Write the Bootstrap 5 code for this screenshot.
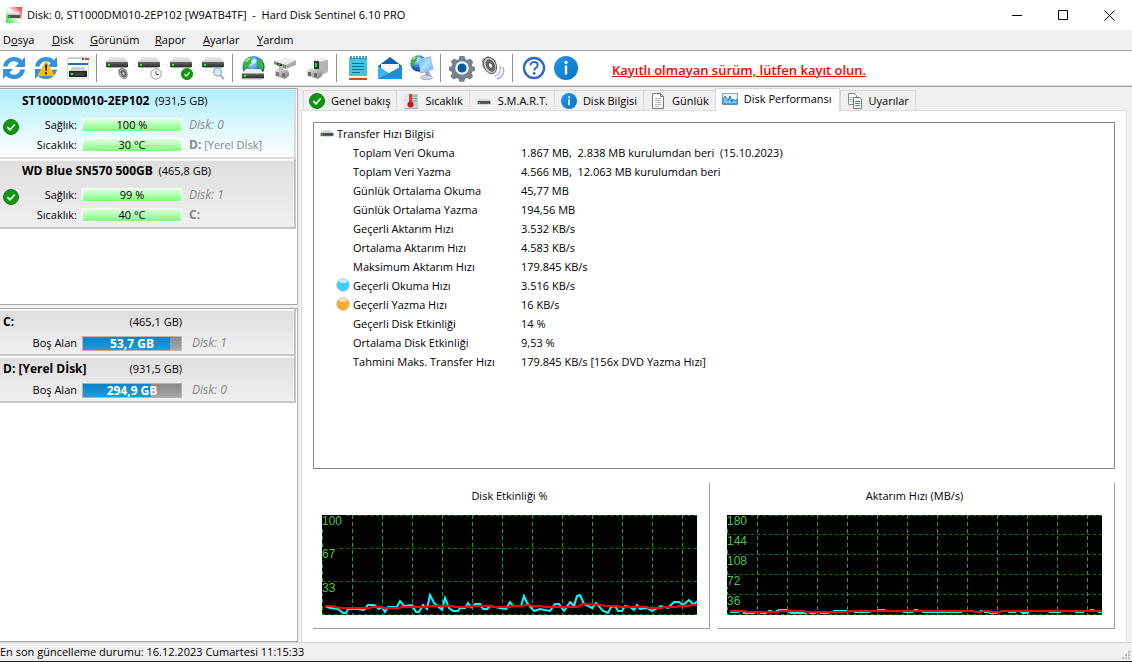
<!DOCTYPE html>
<html lang="tr">
<head>
<meta charset="utf-8">
<meta name="viewport" content="width=device-width, initial-scale=1">
<title>Hard Disk Sentinel 6.10 PRO</title>
<link href="https://cdn.jsdelivr.net/npm/bootstrap@5.3.0/dist/css/bootstrap.min.css" rel="stylesheet">
<style>
body{font-family:"Open Sans","Noto Sans",sans-serif;font-size:11px;line-height:16px;color:#000;background:#f0f0f0}
b,strong,.vol-name{font-size:12px;font-weight:700}
button{font:inherit;color:inherit}
.titlebar{height:30px;background:#fff;padding-left:6px;gap:5px;font-size:11px}
.titlebar h1{font-size:11px;line-height:16px;font-weight:400;white-space:pre;margin:0}
.win-btn{width:46px;height:30px;border:0;background:none;padding:0;display:grid;place-items:center}
.menubar{height:20px}
.menubar .nav{padding-left:3px}
.menubar a{color:#000;padding:0;line-height:20px}
.menubar li:nth-child(1){width:49px}.menubar li:nth-child(2){width:38px}
.menubar li:nth-child(3){width:65px}.menubar li:nth-child(4){width:48px}.menubar li:nth-child(5){width:54px}
.toolbar{background:#fff;border-top:1px solid #a0a0a0;border-bottom:1px solid #dcdcdc;min-height:36px;gap:4px}
.tool-btn{width:28px;height:28px;border:0;padding:0;background:none;display:block}
.tool-btn svg{display:block}
.tool-sep{width:1px;height:28px;background:#909090;margin-right:3px}
.reg-note{font-size:13px;font-weight:600;line-height:20px;color:#f00;margin-left:28px;padding-top:4px}
.reg-note:hover{color:#f00}
.workspace{border-top:1px solid #a0a0a0;padding-top:1px;min-height:0}
.side{width:298px;gap:3px}
.side-list{background:#fff;border:1px solid #a8a8a8;border-left:0;overflow:hidden;padding-right:1px}
.disks{flex:217 1 0}.vols{flex:334 1 0}
.disk-item{min-height:70px;padding:0 0 0 3px;gap:3px;background:linear-gradient(#dedede,#f0f0f0);border:solid #c6c6c6;border-width:0 2px 2px 0;box-shadow:inset 0 1px #fff,inset 0 2px #f4f4f4}
.disk-item.selected{background:linear-gradient(#b0efff,#fff);border-color:#dcdcdc;box-shadow:inset 0 1px #d8f6ff}
.item-title{line-height:20px;margin-bottom:4px}
.stat{height:20px;gap:5px}
.stat-label{width:55px;text-align:right}
.meter-ok{width:100px;height:14px;border:1px solid #fff;border-width:1px;background:linear-gradient(#e2ffe2,#7cff7c);text-align:center;line-height:12px}
.note{color:#888;margin-left:2px}
em.note{font-size:12px}
.vol-item{padding:3px 0 0 3px;background:linear-gradient(#dedede,#f0f0f0);border:solid #c6c6c6;border-width:0 2px 2px 0;box-shadow:inset 0 1px #fff,inset 0 2px #f4f4f4}
.vol-head{width:179px;line-height:20px}
.vol-row{height:22px;gap:5px}
.vol-row .stat-label{width:74px}
.meter-vol{width:100px;height:15px;border:1px solid #b4b4b4;border-radius:0;background:linear-gradient(#888,#a8a8a8);position:relative}
.meter-vol .progress-bar{background:linear-gradient(#0d83c4,#209bdb)}
.meter-text{position:absolute;inset:0;text-align:center;color:#fff;font-size:12px;font-weight:700;line-height:13px}
.vol-row .note{margin-left:5px}
.content-area{margin:2px 5px 0 3px;min-width:0}
.tabs{padding-left:2px;border:0;height:21px;flex-wrap:nowrap;align-items:flex-end}
.tabs .nav-link{height:20px;border:solid #d9d9d9;border-width:1px 0 0 1px;border-radius:0;margin:0 0 1px;padding:0 6px 0 5px;gap:6px;background:#f0f0f0;color:#000;white-space:nowrap;display:flex;align-items:center;line-height:16px}
.tabs .nav-link:hover{border-color:#d9d9d9}
.tabs .nav-link.active{height:23px;margin:0;background:#fff;border-color:#d9d9d9;border-right-width:1px;padding:0 7px 3px 6px;position:relative;z-index:1}
.tabs li:last-child .nav-link{border-right-width:1px}
.tabs li+li .nav-link{padding-left:6px}
.pane{background:#fff;border:1px solid #dcdcdc;border-bottom:0;margin-top:-1px;padding:11px 11px 13px;gap:14px}
.info-list{border:1px solid #828790;padding-top:1px;overflow:hidden}
.info-list table{border-collapse:collapse;width:100%}
.info-list th,.info-list td{height:19px;padding:0;font-weight:400;text-align:left;white-space:pre}
.info-list tbody th{width:207px;padding-left:22px}
.info-list thead th{padding-left:6px}
.info-list thead svg{vertical-align:top}
.bullet{width:17px;display:inline-block;height:14px;vertical-align:top}
.bullet svg{display:block}
.graphs{gap:8px}
.graph-box{flex:1 1 0;border:solid #a0a0a0;border-width:0 1px 1px 0;padding:5px 12px 13px 9px;min-width:0}
.graph-box h2{font-size:11px;line-height:16px;font-weight:400;text-align:center;margin:0 0 11px}
.plot{background:#000;height:100px;position:relative}
.plot svg{display:block;width:100%;height:100px}
.scale{position:absolute;top:0;left:0;height:100px;font:12px/12px "Liberation Sans",Arial,sans-serif;color:#46c846;display:flex;flex-direction:column;align-items:flex-start}
.scale span{flex:1 1 0;min-height:0}
.scale i{font-style:normal;background:#000;display:block;padding:0 3px 0 0}
.statusbar{height:20px;border-top:1px solid #d4d4d4;border-bottom:1px solid #202020;line-height:18px;background:#f0f0f0}
</style>
</head>
<body class="d-flex flex-column min-vh-100 overflow-hidden">
<svg width="0" height="0" class="position-absolute" aria-hidden="true">
<defs>
<linearGradient id="gDrv" x2="0" y2="1"><stop stop-color="#666"/><stop offset="1" stop-color="#2c2c2c"/></linearGradient>
<linearGradient id="gTop" x2="0" y2="1"><stop stop-color="#e9e9ee"/><stop offset="1" stop-color="#cfcfd6"/></linearGradient>
<radialGradient id="gGlobe" cx=".4" cy=".3" r=".75"><stop stop-color="#d4f0ff"/><stop offset=".45" stop-color="#2a8fe0"/><stop offset="1" stop-color="#062e88"/></radialGradient>
<linearGradient id="gMetal" x2="1" y2="1"><stop stop-color="#f2f2f2"/><stop offset="1" stop-color="#777"/></linearGradient>
<linearGradient id="gInfo" x2="1" y2="1"><stop stop-color="#1f9ae8"/><stop offset="1" stop-color="#0671c4"/></linearGradient>
<linearGradient id="gScreen" x2="1" y2="1"><stop stop-color="#5ab8f8"/><stop offset=".5" stop-color="#a8e4ff"/><stop offset="1" stop-color="#4aa8f0"/></linearGradient>
<symbol id="drive" viewBox="0 0 24 12"><path d="M5 0h14l4 5H1z" fill="url(#gTop)"/><path d="M1 5h22v5H1z" fill="url(#gDrv)"/><path d="M2 10h20v1H2z" fill="#aaa"/><path d="M3 7h2v2H3z" fill="#2f2"/></symbol>
<symbol id="ok" viewBox="0 0 16 16"><circle cx="8" cy="8" r="7.5" fill="#0b990b" stroke="#15761b"/><path d="M4.3 8.2 7 10.7l4.7-5.2" fill="none" stroke="#fff" stroke-width="1.7"/></symbol>
<symbol id="info" viewBox="0 0 24 24"><circle cx="12" cy="12" r="12" fill="url(#gInfo)"/><circle cx="12" cy="6.3" r="1.6" fill="#fff"/><path d="M10.8 9.5h2.4v9h-2.4z" fill="#fff"/></symbol>
<symbol id="arrows" viewBox="0 0 28 28"><g id="arw"><path d="M3 12.6C4 6.500 8.500 3 14 3c3.300 0 6 1.100 8 3l3-3v10H15l3.700-3.700C17.500 8 16 7.300 14 7.300c-3.200 0-5.500 2-6.400 5.300z" fill="#3294e0"/></g><use href="#arw" transform="rotate(180 14 14)"/></symbol>
<symbol id="globe" viewBox="0 0 24 24"><circle cx="12" cy="12" r="11.500" fill="url(#gGlobe)"/><path d="M1.500 9C2 5 5 2.500 8 1.500l3 1.500-2 3 1 2-3 2-1 4-2 2c-2-2-3-4-2.500-7zM17 3l3 2 2.500 5-.5 5-3 1-1-4-3-2 1-3z" fill="#3fae3a"/><path d="M3 6c1-2 3-3.500 5-4.200l1 1.700L5 7z" fill="#9be088"/><path d="M12 3c2 0 3 1 3 3l-2 3-2-2z" fill="#eaf8ff" opacity=".8"/></symbol>
<symbol id="speaker" viewBox="0 0 24 24"><path d="M2 5 9 1l9 5-2 15-8-2-5-6z" fill="#9a9a9a"/><ellipse cx="11.500" cy="12" rx="7" ry="9.800" fill="#ccc" stroke="#555" transform="rotate(-25 11.500 12)"/><ellipse cx="12" cy="12" rx="5" ry="7.600" fill="#686868" transform="rotate(-25 12 12)"/><ellipse cx="12" cy="12" rx="2.300" ry="3.400" fill="#eee" stroke="#444" transform="rotate(-25 12 12)"/></symbol>
</defs>
</svg>

<header>
  <div class="titlebar d-flex align-items-center">
    <svg width="16" height="16" viewBox="0 0 16 16" aria-hidden="true"><defs><linearGradient id="gApp" x1="1" x2="0" y2="1"><stop stop-color="#f22"/><stop offset=".5" stop-color="#fff"/><stop offset="1" stop-color="#1e3"/></linearGradient></defs><path d="M0 0h16v16H0z" fill="url(#gApp)"/><use href="#drive" x="1" y="5" width="14" height="7"/></svg>
    <h1>Disk: 0, ST1000DM010-2EP102 [W9ATB4TF]  -  Hard Disk Sentinel 6.10 PRO</h1>
    <div class="d-flex ms-auto">
      <button class="win-btn" aria-label="Simge durumuna küçült"><svg width="11" height="11"><path d="M0 5.500h10" stroke="#000"/></svg></button>
      <button class="win-btn" aria-label="Ekranı kapla"><svg width="11" height="11"><path d="M.5.5h9v9h-9z" fill="none" stroke="#000"/></svg></button>
      <button class="win-btn" aria-label="Kapat"><svg width="11" height="11"><path d="m.5.5 10 10m0-10-10 10" stroke="#000"/></svg></button>
    </div>
  </div>
  <nav class="menubar">
    <ul class="nav flex-nowrap">
      <li><a class="nav-link" href="#">D<u>o</u>sya</a></li>
      <li><a class="nav-link" href="#"><u>D</u>isk</a></li>
      <li><a class="nav-link" href="#"><u>G</u>örünüm</a></li>
      <li><a class="nav-link" href="#"><u>R</u>apor</a></li>
      <li><a class="nav-link" href="#"><u>A</u>yarlar</a></li>
      <li><a class="nav-link" href="#"><u>Y</u>ardım</a></li>
    </ul>
  </nav>
  <div class="toolbar d-flex align-items-center" role="toolbar">
    <button class="tool-btn" aria-label="Yenile"><svg width="28" height="28"><use href="#arrows"/></svg></button>
    <button class="tool-btn" aria-label="Uyarılı yenile"><svg width="28" height="28" viewBox="0 0 28 28"><use href="#arrows"/><path d="M14 8 21 21H7z" fill="#fdbb12" stroke="#fdbb12" stroke-width="2" stroke-linejoin="round"/><path d="M13 10.500h2.200l-.4 6.500h-1.400zM13 18.300h2v2h-2z" fill="#222"/></svg></button>
    <button class="tool-btn" aria-label="Disk penceresi"><svg width="28" height="28" viewBox="0 0 28 28"><path d="M3.500 4.500h21v20h-21z" fill="#fff" stroke="#ddd"/><path d="M4 9h20v2H4z" fill="#1272c8"/><path d="M4 4h21" stroke="#aaa"/><path d="M18 4h2v2h-2z" fill="#555"/><path d="M21 4h4v2h-4z" fill="#d43"/><path d="M8 13h12l3 4H5z" fill="#d0d0d4"/><path d="M5 17h18v6H5z" fill="#222"/><path d="M6 18.500h15v3H6z" fill="#444"/><path d="M7 19h2v2H7z" fill="#2f2"/></svg></button>
    <span class="tool-sep"></span>
    <button class="tool-btn" aria-label="Sesli test"><svg width="28" height="28"><use href="#drive" x="1" y="3" width="24" height="12"/><use href="#speaker" x="13" y="13" width="13" height="13"/></svg></button>
    <button class="tool-btn" aria-label="Zamanlama"><svg width="28" height="28"><use href="#drive" x="1" y="3" width="24" height="12"/><circle cx="20" cy="20" r="5.200" fill="#f4f4f4" stroke="#b4b4b4" stroke-width="1.200"/><path d="M20 17v3.500h3" fill="none" stroke="#666"/></svg></button>
    <button class="tool-btn" aria-label="Disk testi"><svg width="28" height="28"><use href="#drive" x="1" y="3" width="24" height="12"/><use href="#ok" x="13" y="14" width="12" height="12"/></svg></button>
    <button class="tool-btn" aria-label="Disk inceleme"><svg width="28" height="28"><use href="#drive" x="1" y="3" width="24" height="12"/><path d="m20 21 4 4" stroke="#b9a89c" stroke-width="2.200"/><circle cx="17.500" cy="18" r="4" fill="#cdeafe" stroke="#9ab4cc" stroke-width="1.400"/></svg></button>
    <span class="tool-sep"></span>
    <button class="tool-btn" aria-label="Ağ diski"><svg width="28" height="28"><use href="#globe" x="2" y="1" width="23" height="24"/><path d="M6 15h14l5 5H1z" fill="#eee"/><path d="M2 19.500h22v5H2z" fill="url(#gDrv)"/><path d="M3 24.500h20v1H3z" fill="#bbb"/><path d="M4 21h2v2H4z" fill="#2f2"/></svg></button>
    <button class="tool-btn" aria-label="Bağlantı"><svg width="28" height="28"><path d="m2 7 11-3 11 2-10 5z" fill="#ececec"/><path d="M2 7l12 4v4L2 10z" fill="#888"/><path d="m14 11 10-5v5l-10 4z" fill="#aaa"/><path d="m5 9 5 1.500v2L5 11z" fill="#2a2a2a"/><path d="M6 10h2v1H6z" fill="#2d2"/><path d="m3 16 4-2 8 2 2 2v4l-4 3-10-3z" fill="url(#gMetal)"/><path d="M4 18h3v4H4zm6 1h3v4h-3z" fill="#777"/><path d="M7 12h4v4H7z" fill="#bbb"/></svg></button>
    <button class="tool-btn" aria-label="Aygıt"><svg width="28" height="28"><path d="m10 6 9-2 5 2v12l-8 4-6-4z" fill="#b4b4b8"/><path d="m10 6 9-2 5 2-9 2z" fill="#eee"/><path d="M10 7h5v8h-5z" fill="#333"/><path d="M11 9h2v4h-2z" fill="#1d4"/><path d="m2 17 4-3 9 2 3 2v4l-4 3-10-3z" fill="url(#gMetal)"/><path d="M4 18h3v4H4zm6 1h3v4h-3z" fill="#666"/></svg></button>
    <span class="tool-sep"></span>
    <button class="tool-btn" aria-label="Rapor"><svg width="28" height="28"><path d="M5 4h18v19H5z" fill="#44c4e4"/><path d="M5 22h18v2H5z" fill="#f0f0e8"/><path d="M5 24h18v2H5z" fill="#b2591b"/><path d="M7 2v3m3-3v3m3-3v3m3-3v3m3-3v3m3-3v3" stroke="#146d92" stroke-width="1.400"/><path d="M8 9.500h12M8 12.500h12m-12 3h12m-12 3h8" stroke="#136c92" stroke-width="1.200"/></svg></button>
    <button class="tool-btn" aria-label="E-posta"><svg width="28" height="28"><path d="m2 12 12-9 12 9v13H2z" fill="#0c62b0"/><path d="M5 10h18v10H5z" fill="#f6f6f6"/><path d="m2 12 12 8 12-8v13H2z" fill="#38b4f4"/><path d="m2 25 24-13v13z" fill="#1a8ee0"/></svg></button>
    <button class="tool-btn" aria-label="Ağ"><svg width="28" height="28"><use href="#globe" x="2" y="1" width="17" height="17"/><path d="m11 6 11-3 3 12-12 4z" fill="url(#gScreen)" stroke="#b4b8e0" stroke-width="1.500"/><path d="m17 18 4-1 2 6-5 2z" fill="#9ca0d0"/><ellipse cx="18.500" cy="23.500" rx="6" ry="2.200" fill="#cfd2ee" stroke="#8b8fc0" stroke-width=".7"/></svg></button>
    <span class="tool-sep"></span>
    <button class="tool-btn" aria-label="Ayarlar"><svg width="28" height="28"><path d="M11.500 2h5l.8 3.300 2 .8 3-1.600 3 3.500-1.500 2.800.6 1.500 2.600.7v3.800l-2.600.8-.8 2 1.500 3-3.300 3-2.900-1.500-2 .9-.6 2.800h-5l-.7-2.900-2-.8-3 1.500-3-3.100 1.500-2.900-.8-2L1 16.800V13l2.500-.7.800-2-1.500-2.800 3.100-3.100L9 5.900l1.800-.7z" fill="#74828e"/><circle cx="14" cy="14" r="6.800" fill="#f4f6f8"/><circle cx="14" cy="14" r="4.500" fill="#0858a8"/></svg></button>
    <button class="tool-btn" aria-label="Ses"><svg width="28" height="28"><use href="#speaker" x="0" y="1" width="21" height="21"/><path d="M15 22c4-1 6-5 5-10m-3 13c6-2 8-7 6-12" fill="none" stroke="#aeb0dc" stroke-width="1.500"/></svg></button>
    <span class="tool-sep"></span>
    <button class="tool-btn" aria-label="Yardım"><svg width="28" height="28"><circle cx="14" cy="14" r="10" fill="#fff" stroke="#3069cc" stroke-width="2.400"/><path d="M10.500 11.500c0-2.200 1.500-3.500 3.600-3.500s3.600 1.300 3.600 3.200c0 2.800-3.500 2.600-3.500 5.300" fill="none" stroke="#3069cc" stroke-width="2.100"/><circle cx="14.200" cy="19.500" r="1.400" fill="#3069cc"/></svg></button>
    <button class="tool-btn" aria-label="Hakkında"><svg width="28" height="28"><use href="#info" x="2" y="2" width="24" height="24"/></svg></button>
    <a class="reg-note" href="#">Kayıtlı olmayan sürüm, lütfen kayıt olun.</a>
  </div>
</header>

<main class="workspace d-flex flex-grow-1">
  <aside class="side d-flex flex-column flex-shrink-0">
    <section class="side-list disks">
      <article class="disk-item selected d-flex align-items-center">
        <svg class="mt-2 flex-shrink-0" width="16" height="16"><use href="#ok"/></svg>
        <div>
          <div class="item-title"><b>ST1000DM010-2EP102</b>&nbsp; (931,5 GB)</div>
          <div class="stat d-flex align-items-center"><span class="stat-label">Sağlık:</span><span class="meter-ok">100 %</span><em class="note">Disk: 0</em></div>
          <div class="stat d-flex align-items-center"><span class="stat-label">Sıcaklık:</span><span class="meter-ok">30 °C</span><span class="note"><b>D:</b> [Yerel Dİsk]</span></div>
        </div>
      </article>
      <article class="disk-item d-flex align-items-center">
        <svg class="mt-2 flex-shrink-0" width="16" height="16"><use href="#ok"/></svg>
        <div>
          <div class="item-title"><b>WD Blue SN570 500GB</b>&nbsp; (465,8 GB)</div>
          <div class="stat d-flex align-items-center"><span class="stat-label">Sağlık:</span><span class="meter-ok">99 %</span><em class="note">Disk: 1</em></div>
          <div class="stat d-flex align-items-center"><span class="stat-label">Sıcaklık:</span><span class="meter-ok">40 °C</span><span class="note"><b>C:</b></span></div>
        </div>
      </article>
    </section>
    <section class="side-list vols">
      <article class="vol-item">
        <div class="vol-head d-flex justify-content-between"><span class="vol-name">C:</span><span>(465,1 GB)</span></div>
        <div class="vol-row d-flex align-items-center"><span class="stat-label">Boş Alan</span><div class="progress meter-vol"><div class="progress-bar" style="width:89%"></div><span class="meter-text">53,7 GB</span></div><em class="note">Disk: 1</em></div>
      </article>
      <article class="vol-item">
        <div class="vol-head d-flex justify-content-between"><span class="vol-name">D: [Yerel Dİsk]</span><span>(931,5 GB)</span></div>
        <div class="vol-row d-flex align-items-center"><span class="stat-label">Boş Alan</span><div class="progress meter-vol"><div class="progress-bar" style="width:69%"></div><span class="meter-text">294,9 GB</span></div><em class="note">Disk: 0</em></div>
      </article>
    </section>
  </aside>

  <div class="content-area d-flex flex-column flex-grow-1">
    <ul class="nav nav-tabs tabs" role="tablist">
      <li><button class="nav-link" role="tab"><svg width="16" height="16"><use href="#ok"/></svg>Genel bakış</button></li>
      <li><button class="nav-link" role="tab"><svg width="16" height="16"><path d="M1 1h14v14H1z" fill="#c9d0da"/><path d="M1 1h5v14H1z" fill="#e2e4ea"/><path d="M9 3h5M9 5.500h5M9 8h5" stroke="#6a8"/><path d="M6 1h3v8H6z" fill="#e33"/><circle cx="7.500" cy="11.500" r="3" fill="#d41414"/><path d="M1.500 15.500h13" stroke="#a8acb8"/></svg>Sıcaklık</button></li>
      <li><button class="nav-link" role="tab"><svg width="16" height="16"><use href="#drive" x="1" y="5" width="14" height="7"/></svg>S.M.A.R.T.</button></li>
      <li><button class="nav-link" role="tab"><svg width="16" height="16"><use href="#info"/></svg>Disk Bilgisi</button></li>
      <li><button class="nav-link" role="tab"><svg width="16" height="16"><path d="M2.500.5h8l3 3v12h-11z" fill="#fff" stroke="#777"/><path d="M10.500.5v3h3" fill="none" stroke="#777"/><path d="M5 5.500h6m-6 2h6m-6 2h6m-6 2h6m-6 2h4" stroke="#bbb"/></svg>Günlük</button></li>
      <li><button class="nav-link active" role="tab" aria-selected="true"><svg width="16" height="16"><path d="M.5 2.500h15v11H.5z" fill="#e4f3fd" stroke="#8fa4b4"/><path d="m1 9 2-4 2 3 1 2 2-5 2 6 1-3 2 2 2-2v5H1z" fill="#7cc4f4" stroke="#1d7ccc"/></svg>Disk Performansı</button></li>
      <li><button class="nav-link" role="tab"><svg width="16" height="16"><path d="M1.500.5h6l2 2v9h-8z" fill="#fff" stroke="#888"/><path d="M3 4.500h4m-4 2h4m-4 2h4" stroke="#9bbbe0"/><path d="M6.500 4.500h6l2 2v9h-8z" fill="#fff" stroke="#777"/><path d="M8 8.500h5m-5 2h5m-5 2h5" stroke="#3f87d8"/></svg>Uyarılar</button></li>
    </ul>
    <div class="pane d-flex flex-column flex-grow-1">
      <div class="info-list flex-grow-1">
        <table>
          <thead><tr><th colspan="2"><svg width="17" height="14"><use href="#drive" x="0" y="4" width="14" height="7"/></svg>Transfer Hızı Bilgisi</th></tr></thead>
          <tbody>
            <tr><th><span class="bullet"></span>Toplam Veri Okuma</th><td>1.867 MB,  2.838 MB kurulumdan beri  (15.10.2023)</td></tr>
            <tr><th><span class="bullet"></span>Toplam Veri Yazma</th><td>4.566 MB,  12.063 MB kurulumdan beri</td></tr>
            <tr><th><span class="bullet"></span>Günlük Ortalama Okuma</th><td>45,77 MB</td></tr>
            <tr><th><span class="bullet"></span>Günlük Ortalama Yazma</th><td>194,56 MB</td></tr>
            <tr><th><span class="bullet"></span>Geçerli Aktarım Hızı</th><td>3.532 KB/s</td></tr>
            <tr><th><span class="bullet"></span>Ortalama Aktarım Hızı</th><td>4.583 KB/s</td></tr>
            <tr><th><span class="bullet"></span>Maksimum Aktarım Hızı</th><td>179.845 KB/s</td></tr>
            <tr><th><span class="bullet"><svg width="14" height="14"><circle cx="7" cy="7" r="6.500" fill="#3fcdfb" stroke="#d5d5d5"/><ellipse cx="7" cy="3" rx="4" ry="2" fill="#c4f0fd"/></svg></span>Geçerli Okuma Hızı</th><td>3.516 KB/s</td></tr>
            <tr><th><span class="bullet"><svg width="14" height="14"><circle cx="7" cy="7" r="6.500" fill="#fbab2c" stroke="#d5d5d5"/><ellipse cx="7" cy="3" rx="4" ry="2" fill="#fde0b4"/></svg></span>Geçerli Yazma Hızı</th><td>16 KB/s</td></tr>
            <tr><th><span class="bullet"></span>Geçerli Disk Etkinliği</th><td>14 %</td></tr>
            <tr><th><span class="bullet"></span>Ortalama Disk Etkinliği</th><td>9,53 %</td></tr>
            <tr><th><span class="bullet"></span>Tahmini Maks. Transfer Hızı</th><td>179.845 KB/s [156x DVD Yazma Hızı]</td></tr>
          </tbody>
        </table>
      </div>
      <div class="graphs d-flex">
        <section class="graph-box">
          <h2>Disk Etkinliği %</h2>
          <div class="plot">
            <svg viewBox="0 0 375 100" preserveAspectRatio="none" fill="none">
              <path d="M0 .5h375M0 33.500h375M0 66.500h375M0 99.500h375" stroke="#087c08" stroke-dasharray="3 3"/>
              <path d="M.5 0v100m30-100v100m30-100v100m30-100v100m30-100v100m30-100v100m30-100v100m30-100v100m30-100v100m30-100v100m30-100v100m30-100v100m30-100v100" stroke="#22a222" stroke-dasharray="4 3"/>
              <polyline stroke="#0ff" stroke-width="2" points="3,91 8,93 16,94 21,98 24,98 26,94 35,94 42,95 46,90 52,90 57,94 60,92 63,97 66,92 75,92 78,86 82,91 90,90 94,97 97,97 101,90 105,94 108,80 112,88 120,95 123,83 127,93 131,96 136,96 138,93 143,93 146,88 149,92 153,89 158,89 161,94 165,94 168,91 178,93 184,94 188,87 191,91 199,91 202,81 205,88 212,96 218,94 228,96 233,89 237,89 242,96 248,87 252,91 255,81 258,80 262,89 270,93 274,88 281,96 286,98 289,92 293,91 296,96 300,96 303,91 308,92 312,95 315,90 318,94 325,93 330,96 339,91 346,93 352,87 357,87 361,90 367,85 372,90 375,86"/>
              <polyline stroke="#f00" stroke-width="2" points="3,91 10,91 18,93 48,93 49,92 60,92 61,93 78,93 79,92 105,92 108,91 131,91 132,92 148,92 149,91 170,91 171,92 188,92 189,91 200,91 203,90 208,90 209,91 220,91 221,92 255,92 260,89 280,90 283,91 296,91 297,92 325,92 326,93 340,93 341,92 355,92 356,91 367,91 368,90 375,90"/>
            </svg>
            <div class="scale"><span><i>100</i></span><span><i>67</i></span><span><i>33</i></span></div>
          </div>
        </section>
        <section class="graph-box">
          <h2>Aktarım Hızı (MB/s)</h2>
          <div class="plot">
            <svg viewBox="0 0 375 100" preserveAspectRatio="none" fill="none">
              <path d="M0 .5h375M0 19.500h375M0 39.500h375M0 59.500h375M0 79.500h375M0 99.500h375" stroke="#087c08" stroke-dasharray="3 3"/>
              <path d="M.5 0v100m30-100v100m30-100v100m30-100v100m30-100v100m30-100v100m30-100v100m30-100v100m30-100v100m30-100v100m30-100v100m30-100v100m30-100v100" stroke="#22a222" stroke-dasharray="4 3"/>
              <path stroke="#0ff" stroke-width="2" d="M3 97h9M16 98h12M33 98h7M41 96h4M49 96h3M51 95h9M61 97h6M63 98h17M82 98h7M93 98h9M106 96h14M127 97h16M151 95h7M176 97h10M187 95h4M195 97h40M253 96h2M257 97h13M262 98h8M281 97h8M293 97h9M295 98h6M322 97h12M348 97h9M363 95h4M371 97h4"/>
              <polyline stroke="#f00" stroke-width="2" points="3,96 18,96 19,97 52,97 53,96 77,96 78,97 120,97 121,96 246,96 247,97 255,97 256,96 262,96 263,97 273,97 274,96 375,96"/>
            </svg>
            <div class="scale"><span><i>180</i></span><span><i>144</i></span><span><i>108</i></span><span><i>72</i></span><span><i>36</i></span></div>
          </div>
        </section>
      </div>
    </div>
  </div>
</main>

<footer class="statusbar d-flex justify-content-between align-items-end">
  <span>En son güncelleme durumu: 16.12.2023 Cumartesi 11:15:33</span>
  <svg width="10" height="10" aria-hidden="true"><path d="M6 0h2v2H6zM3 3h2v2H3zm3 0h2v2H6zM0 6h2v2H0zm3 0h2v2H3zm3 0h2v2H6z" fill="#b8b8b8"/></svg>
</footer>
<script src="https://cdn.jsdelivr.net/npm/bootstrap@5.3.0/dist/js/bootstrap.bundle.min.js"></script>
</body>
</html>
